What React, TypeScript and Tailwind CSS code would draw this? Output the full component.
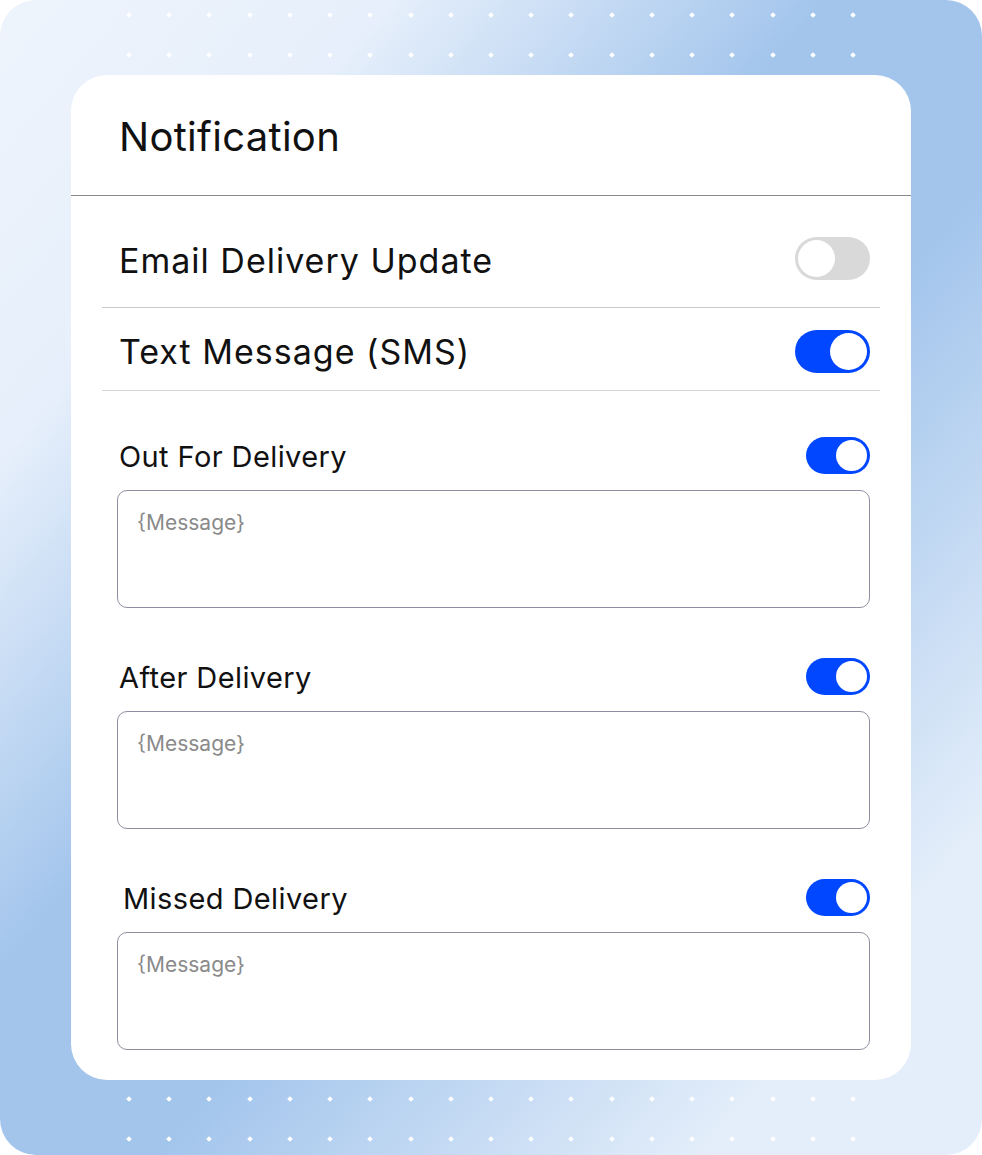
import React, { useState } from 'react';

const DotRow: React.FC = () => (
    <div className="flex justify-between w-[728px] ml-[127px]">
        {Array.from({ length: 19 }).map((_, i) => (
            <span key={i} className="block w-[4px] h-[4px] rotate-45 bg-white" />
        ))}
    </div>
);

const Toggle: React.FC<{ on: boolean; size: 'lg' | 'sm'; onChange: () => void }> = ({ on, size, onChange }) => {
    const lg = size === 'lg';
    return (
        <button
            onClick={onChange}
            className={`flex items-center rounded-full p-[3px] shrink-0 ${lg ? 'w-[75px] h-[43px]' : 'w-[64px] h-[37px]'} ${on ? 'bg-[#0047ff] justify-end' : 'bg-[#d9d9d9] justify-start'}`}
        >
            <span className={`block rounded-full bg-white ${lg ? 'w-[37px] h-[37px]' : 'w-[31px] h-[31px]'}`} />
        </button>
    );
};

const MessageBlock: React.FC<{ label: string; on: boolean; onChange: () => void; offset?: boolean }> = ({ label, on, onChange, offset }) => (
    <div>
        <div className="flex items-center justify-between h-[37px]">
            <span className={`text-[29px] tracking-[0.4px] text-[#111] leading-none mt-[1px] ${offset ? 'pl-[4px]' : ''}`}>{label}</span>
            <Toggle on={on} size="sm" onChange={onChange} />
        </div>
        <textarea
            placeholder="{Message}"
            className="mt-[16px] ml-[-2px] block w-[753px] h-[118px] resize-none rounded-[10px] border border-[#8e8fa0] px-[19px] pt-[21px] pb-[10px] text-[21px] leading-none text-[#333] placeholder:text-[#8a8a8a] outline-none"
        />
    </div>
);

const App: React.FC = () => {
    const [email, setEmail] = useState(false);
    const [sms, setSms] = useState(true);
    const [out, setOut] = useState(true);
    const [after, setAfter] = useState(true);
    const [missed, setMissed] = useState(true);

    return (
        <div
            className="w-[982px] h-[1155px] rounded-[36px] overflow-hidden bg-[linear-gradient(to_bottom_right,#eef4fc_0%,#e6effb_20%,#a3c5ec_42%,#a3c5ec_58%,#e4eefa_86%)]"
            style={{ fontFamily: 'Inter, "Noto Sans", sans-serif' }}
        >
            <div className="h-[75px] flex flex-col pt-[13px] gap-[36px]">
                <DotRow />
                <DotRow />
            </div>

            <div className="mx-[71px] h-[1005px] bg-white rounded-[36px] flex flex-col">
                <div className="h-[121px] flex items-center px-[48px] border-b border-[#8a8a8a]">
                    <h1 className="text-[40px] tracking-[0.3px] text-[#111] leading-none mt-[4px]">Notification</h1>
                </div>

                <div className="mx-[31px] h-[112px] flex items-center justify-between pl-[17px] pr-[10px] pt-[13px] border-b border-[#c9c9ce]">
                    <span className="text-[34px] tracking-[1px] text-[#111] leading-none mt-[5px]">Email Delivery Update</span>
                    <Toggle on={email} size="lg" onChange={() => setEmail(!email)} />
                </div>

                <div className="mx-[31px] h-[83px] flex items-center justify-between pl-[17px] pr-[10px] pt-[4px] border-b border-[#d4d4d8]">
                    <span className="text-[34px] tracking-[1px] text-[#111] leading-none mt-[2px]">Text Message (SMS)</span>
                    <Toggle on={sms} size="lg" onChange={() => setSms(!sms)} />
                </div>

                <div className="pl-[48px] pr-[41px] pt-[46px] flex flex-col gap-[50px]">
                    <MessageBlock label="Out For Delivery" on={out} onChange={() => setOut(!out)} />
                    <MessageBlock label="After Delivery" on={after} onChange={() => setAfter(!after)} />
                    <MessageBlock label="Missed Delivery" on={missed} onChange={() => setMissed(!missed)} offset />
                </div>
            </div>

            <div className="h-[75px] flex flex-col pt-[17px] gap-[36px]">
                <DotRow />
                <DotRow />
            </div>
        </div>
    );
};

export default App;
